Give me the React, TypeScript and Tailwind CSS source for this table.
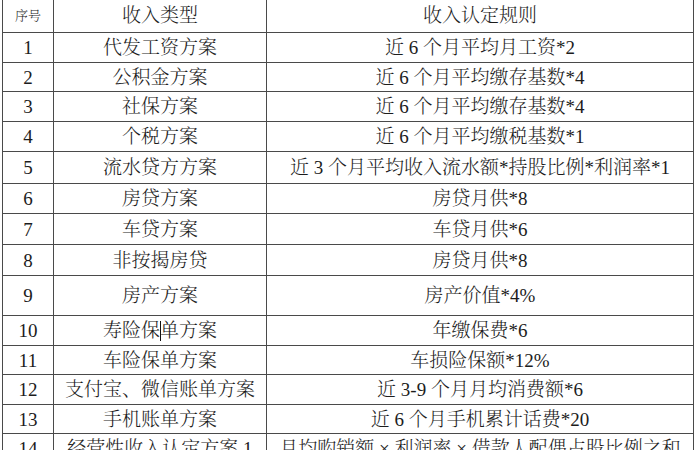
import React from "react";

type Row = { n: string; t: React.ReactNode; r: string; h: string };

const rows: Row[] = [
  { n: "1", t: "代发工资方案", r: "近 6 个月平均月工资*2", h: "h-[30px]" },
  { n: "2", t: "公积金方案", r: "近 6 个月平均缴存基数*4", h: "h-[29px]" },
  { n: "3", t: "社保方案", r: "近 6 个月平均缴存基数*4", h: "h-[30px]" },
  { n: "4", t: "个税方案", r: "近 6 个月平均缴税基数*1", h: "h-[30px]" },
  { n: "5", t: "流水贷方方案", r: "近 3 个月平均收入流水额*持股比例*利润率*1", h: "h-[32px]" },
  { n: "6", t: "房贷方案", r: "房贷月供*8", h: "h-[30px]" },
  { n: "7", t: "车贷方案", r: "车贷月供*6", h: "h-[31px]" },
  { n: "8", t: "非按揭房贷", r: "房贷月供*8", h: "h-[31px]" },
  { n: "9", t: "房产方案", r: "房产价值*4%", h: "h-[40px]" },
  {
    n: "10",
    t: (
      <>
        寿险保
        <span className="inline-block w-px h-[20px] bg-[#111] align-middle -mr-px" />
        单方案
      </>
    ),
    r: "年缴保费*6",
    h: "h-[30px]",
  },
  { n: "11", t: "车险保单方案", r: "车损险保额*12%", h: "h-[29px]" },
  { n: "12", t: "支付宝、微信账单方案", r: "近 3-9 个月月均消费额*6", h: "h-[30px]" },
  { n: "13", t: "手机账单方案", r: "近 6 个月手机累计话费*20", h: "h-[29px]" },
  {
    n: "14",
    t: "经营性收入认定方案 1",
    r: "月均购销额 × 利润率 × 借款人配偶占股比例之和",
    h: "h-[30px]",
  },
];

const font = {
  fontFamily:
    '"Liberation Serif", "Noto Serif CJK SC", "Noto Sans CJK SC", serif',
};

export default function App() {
  return (
    <div
      className="w-[697px] h-[450px] overflow-hidden bg-white text-[#1c1c1c]"
      style={font}
    >
      <div className="ml-[2px] w-[692px] border-l border-[#4a4a4a]">
        <div className="flex h-[33px] border-b border-[#4a4a4a]">
          <div className="w-[51px] border-r border-[#4a4a4a] flex items-center justify-center text-[13px] font-light">
            序号
          </div>
          <div className="w-[213px] border-r border-[#4a4a4a] flex items-center justify-center text-[19px] font-light">
            收入类型
          </div>
          <div className="w-[427px] border-r border-[#4a4a4a] flex items-center justify-center text-[19px] font-light">
            收入认定规则
          </div>
        </div>
        {rows.map((row) => (
          <div
            key={row.n}
            className={`flex ${row.h} border-b border-[#4a4a4a] text-[19px] font-light leading-none`}
          >
            <div className="w-[51px] border-r border-[#4a4a4a] flex items-center justify-center">
              {row.n}
            </div>
            <div className="w-[213px] border-r border-[#4a4a4a] flex items-center justify-center whitespace-nowrap">
              {row.t}
            </div>
            <div className="w-[427px] border-r border-[#4a4a4a] flex items-center justify-center whitespace-nowrap">
              {row.r}
            </div>
          </div>
        ))}
      </div>
    </div>
  );
}
